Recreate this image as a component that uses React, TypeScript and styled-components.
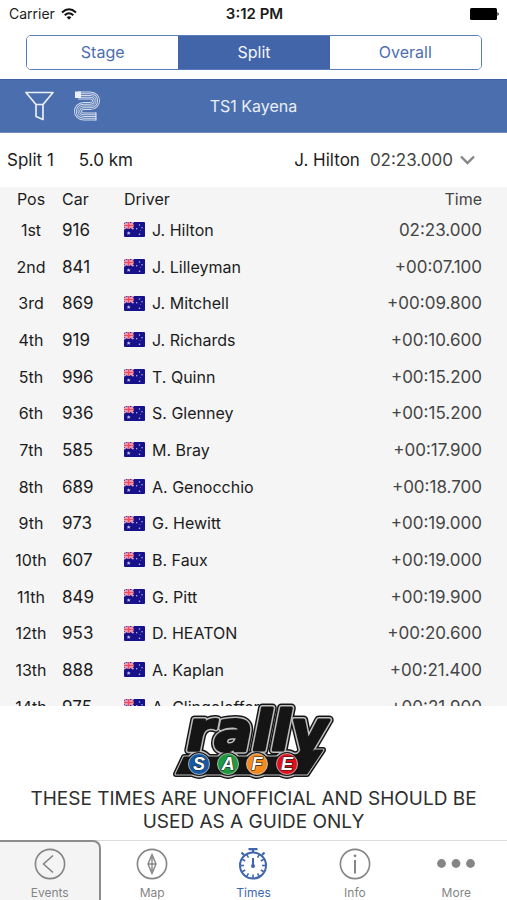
import React, { useState } from "react";
import styled, { createGlobalStyle } from "styled-components";

const GlobalStyle = createGlobalStyle`
  * { box-sizing: border-box; }
  body {
    margin: 0;
    background: #fff;
    color: #1c1c1c;
    font-family: Inter, "Liberation Sans", sans-serif;
    font-size: 16px;
  }
  button { font: inherit; border: 0; padding: 0; cursor: pointer; }
`;

const Screen = styled.div`
  display: flex;
  flex-direction: column;
  height: 100vh;
  overflow: hidden;
`;

const StatusBar = styled.header`
  display: grid;
  grid-template-columns: 1fr auto 1fr;
  align-items: center;
  height: 35px;
  padding: 0 7px 8px 9px;
  font-size: 14px;
  flex: none;
`;

const Carrier = styled.div`
  display: flex;
  align-items: center;
  gap: 6px;
`;

const Clock = styled.strong`
  font-size: 15px;
  font-weight: 600;
`;

const BatteryIcon = styled.svg`
  justify-self: end;
`;

const Segments = styled.div`
  display: flex;
  flex: none;
  height: 35px;
  margin: 0 25px 9px 26px;
  border: 1px solid #5b7dba;
  border-radius: 5px;
  overflow: hidden;
`;

const Segment = styled.button<{ $active: boolean }>`
  flex: 1;
  padding-bottom: 2px;
  color: ${(p) => (p.$active ? "#f4f7fc" : "#4c6fb0")};
  background: ${(p) => (p.$active ? "#4165a8" : "#fff")};
`;

const StageBar = styled.div`
  display: grid;
  grid-template-columns: 1fr auto 1fr;
  align-items: center;
  flex: none;
  height: 54px;
  padding: 0 25px;
  color: #e9eef7;
  background: #4b6eae;
  border-top: 1px solid #3f62a3;
  border-bottom: 1px solid #6f8cc0;
`;

const Tools = styled.div`
  display: flex;
  gap: 20px;
`;

const ToolButton = styled.button`
  display: flex;
  color: inherit;
  background: none;
`;

const StageName = styled.h1`
  margin: 0;
  font-size: 16px;
  font-weight: 400;
`;

const SplitSummary = styled.button`
  display: flex;
  align-items: center;
  flex: none;
  height: 54px;
  padding: 0 32px 0 7px;
  color: #1c1c1c;
  background: #fff;
  font-size: 17px;
  white-space: nowrap;
`;

const Distance = styled.span`
  margin-left: 25px;
`;

const Leader = styled.span`
  margin-left: auto;
`;

const LeaderTime = styled.span`
  margin: 0 7px 0 10px;
  color: #454545;
`;

const Results = styled.main`
  flex: 1;
  min-height: 0;
  overflow: hidden;
  background: #f5f5f5;
`;

const Table = styled.table`
  width: 100%;
  table-layout: fixed;
  border-collapse: collapse;
`;

const HeadRow = styled.tr`
  height: 24px;
`;

const Row = styled.tr`
  height: 37px;
  &:nth-child(3n) { height: 36px; }
`;

const columnWidth = { pos: "62px", car: "62px", driver: "auto", time: "160px" };

const HeadCell = styled.th<{ $col: keyof typeof columnWidth }>`
  width: ${(p) => columnWidth[p.$col]};
  padding: ${(p) => (p.$col === "time" ? "0 25px 0 0" : "0")};
  font-weight: 400;
  text-align: ${(p) => (p.$col === "pos" ? "center" : p.$col === "time" ? "right" : "left")};
  color: ${(p) => (p.$col === "time" ? "#454545" : "#1c1c1c")};
`;

const Cell = styled.td`
  padding: 0;
  white-space: nowrap;
`;

const PosCell = styled(Cell)`
  text-align: center;
`;

const CarCell = styled(Cell)`
  font-size: 17px;
`;

const TimeCell = styled(Cell)`
  padding-right: 25px;
  font-size: 17px;
  text-align: right;
  color: #454545;
`;

const Driver = styled.div`
  display: flex;
  align-items: center;
  gap: 7px;
`;

const Notice = styled.footer`
  display: flex;
  flex-direction: column;
  align-items: center;
  flex: none;
  padding: 0 25px 7px;
  background: #fff;
`;

const NoticeText = styled.p`
  margin: 7px 0 0;
  font-size: 19px;
  line-height: 23px;
  text-align: center;
  color: #2e2e2e;
`;

const TabBar = styled.nav`
  display: grid;
  grid-template-columns: repeat(5, 1fr);
  flex: none;
  height: 60px;
  border-top: 1px solid #dcdcdc;
`;

const Tab = styled.button<{ $active?: boolean; $back?: boolean }>`
  display: flex;
  flex-direction: column;
  align-items: center;
  gap: 4px;
  margin-top: -1px;
  padding-top: 6px;
  font-size: 12px;
  line-height: 18px;
  color: ${(p) => (p.$active ? "#3f66ad" : "#858585")};
  background: ${(p) => (p.$back ? "#f4f4f4" : "transparent")};
  border: 0 solid #8d8d8d;
  border-width: ${(p) => (p.$back ? "2px 2px 0 0" : "2px 0 0")};
  border-color: ${(p) => (p.$back ? "#8d8d8d" : "transparent")};
  border-top-right-radius: ${(p) => (p.$back ? "8px" : "0")};
`;

const Wifi = () => (
  <svg width="16" height="12" viewBox="0 0 16 12" fill="none" stroke="#111" strokeWidth="2">
    <path d="M1 4.4Q8-1.8 15 4.4" />
    <path d="M3.7 7.2Q8 3.3 12.3 7.2" />
    <path d="M5.7 9.2Q8 7.4 10.3 9.2L8 11.8Z" fill="#111" stroke="none" />
  </svg>
);

const Battery = () => (
  <BatteryIcon width="31" height="12" viewBox="0 0 31 12">
    <rect x="1" width="27" height="12" rx="1.5" />
    <path d="M28.5 4Q31 6 28.5 8Z" />
  </BatteryIcon>
);

const Funnel = () => (
  <svg width="29" height="30" viewBox="0 0 29 30" fill="none" stroke="currentColor" strokeWidth="1.7" strokeLinejoin="round">
    <path d="M1 1.5H28L18 13.5H11ZM11 13.5V25.5L18 28.5V13.5" />
  </svg>
);

const Track = () => {
  const d = "M4 4.5H16C24 4.5 24 15 16 15H10C2 15 2 25.5 10 25.5H22";
  return (
    <svg width="26" height="30" viewBox="0 0 26 30" fill="none">
      <path d={d} stroke="#d3ddee" strokeWidth="8" />
      <path d={d} stroke="#4b6eae" strokeWidth="6.2" />
      <path d={d} stroke="#d3ddee" strokeWidth="4.4" />
      <path d={d} stroke="#4b6eae" strokeWidth="2.6" />
      <path d={d} stroke="#d3ddee" strokeWidth="1" />
      <rect x="1" y="0.5" width="6" height="6.5" fill="currentColor" />
      <path d="M22 21.5V29.5" stroke="currentColor" />
    </svg>
  );
};

const Chevron = () => (
  <svg width="15" height="10" viewBox="0 0 15 10" fill="none" stroke="#858585" strokeWidth="2.4">
    <path d="M1 1.5L7.5 8L14 1.5" />
  </svg>
);

const Flag = () => (
  <svg width="21" height="15" viewBox="0 0 21 15" role="img" aria-label="Australia">
    <rect width="21" height="15" rx="1" fill="#17128c" />
    <path d="M0 0L9.5 7M9.5 0L0 7" stroke="#e8a3c0" strokeWidth="1.8" />
    <path d="M4.7 0V7M0 3.5H9.5" stroke="#f3b3c3" strokeWidth="2.8" />
    <path d="M4.7 0V7M0 3.5H9.5" stroke="#ee4a60" strokeWidth="1.6" />
    <g fill="#c5c5ec">
      <path d="M4.7 9.2L5.3 10.5 6.6 10.6 5.7 11.5 6 12.8 4.7 12.1 3.4 12.8 3.7 11.5 2.8 10.6 4.1 10.5Z" />
      <circle cx="15.5" cy="3" r="0.7" />
      <circle cx="12.7" cy="6.8" r="0.7" />
      <circle cx="18" cy="5.8" r="0.7" />
      <circle cx="16.5" cy="8.4" r="0.4" />
      <circle cx="15.5" cy="12.2" r="0.8" />
    </g>
  </svg>
);

const LogoSvg = styled.svg`
  overflow: visible;
`;

const Logo = () => {
  const badges = [
    { x: 29, fill: "#1559a8", letter: "S" },
    { x: 58, fill: "#1f9a41", letter: "A" },
    { x: 87, fill: "#f58a1f", letter: "F" },
    { x: 117, fill: "#e3101c", letter: "E" },
  ];
  const layers = [
    { color: "#151515", text: 9, bar: 6, ring: 8 },
    { color: "#bdbdbd", text: 6, bar: 3, ring: 5 },
    { color: "#151515", text: 3, bar: 1, ring: 2 },
  ];
  return (
    <LogoSvg width="168" height="74" viewBox="0 0 168 74" role="img" aria-label="Rally Safe">
      {layers.map((l, i) => (
        <g key={i} fill={l.color} stroke={l.color} strokeLinejoin="round">
          <path d="M14 51H133L145 44L153 44L137 68H6Z" strokeWidth={l.bar} />
          {badges.map((b) => (
            <circle key={b.x} cx={b.x} cy="58" r="11" strokeWidth={l.ring} />
          ))}
          <text
            x="17"
            y="44"
            fontFamily="DejaVu Sans"
            fontWeight="700"
            fontStyle="italic"
            fontSize="56"
            strokeWidth={l.text}
          >
            rally
          </text>
        </g>
      ))}
      {badges.map((b) => (
        <g key={b.x}>
          <circle cx={b.x} cy="58" r="10.5" fill={b.fill} stroke="#ddd" strokeWidth="0.7" />
          <text
            x={b.x}
            y="64"
            fontFamily="Liberation Sans"
            fontWeight="700"
            fontStyle="italic"
            fontSize="18"
            textAnchor="middle"
            fill="#fff"
            stroke="#222"
            strokeWidth="1.2"
            paintOrder="stroke"
          >
            {b.letter}
          </text>
        </g>
      ))}
    </LogoSvg>
  );
};

const TabIcon = ({ children }: { children: React.ReactNode }) => (
  <svg width="40" height="32" viewBox="0 0 40 32" fill="none" stroke="currentColor" strokeWidth="1.6">
    {children}
  </svg>
);

const icons: Record<string, React.ReactNode> = {
  Events: (
    <TabIcon>
      <circle cx="20" cy="16" r="14.6" />
      <path d="M23 7.5L13.5 16L23 24.5" />
    </TabIcon>
  ),
  Map: (
    <TabIcon>
      <circle cx="20" cy="16" r="14.6" />
      <path d="M20 6.5L24 16L20 25.5L16 16ZM16 16H24M20 9V23" strokeWidth="1.4" />
    </TabIcon>
  ),
  Times: (
    <TabIcon>
      <circle cx="20" cy="17.5" r="13" strokeWidth="2" />
      <path d="M15.5 1.2H24.5M20 1V5M8.5 4.5L11 7M31.5 4.5L29 7" strokeWidth="2.2" />
      <path d="M20 10V17" strokeWidth="2" />
      <circle cx="20" cy="18" r="2" fill="currentColor" stroke="none" />
      {[30, 60, 90, 120, 150, 180, 210, 240, 270, 300, 330].map((a) => (
        <path key={a} d="M20 5V8.5" transform={`rotate(${a} 20 17.5)`} />
      ))}
    </TabIcon>
  ),
  Info: (
    <TabIcon>
      <circle cx="20" cy="16" r="14.6" />
      <path d="M20 12V25.5" strokeWidth="2" />
      <circle cx="20" cy="7.8" r="1.4" fill="currentColor" stroke="none" />
    </TabIcon>
  ),
  More: (
    <TabIcon>
      <g fill="currentColor" stroke="none">
        <circle cx="5.5" cy="15.5" r="4.4" />
        <circle cx="20" cy="15.5" r="4.4" />
        <circle cx="34.5" cy="15.5" r="4.4" />
      </g>
    </TabIcon>
  ),
};

const results = [
  ["1st", "916", "J. Hilton", "02:23.000"],
  ["2nd", "841", "J. Lilleyman", "+00:07.100"],
  ["3rd", "869", "J. Mitchell", "+00:09.800"],
  ["4th", "919", "J. Richards", "+00:10.600"],
  ["5th", "996", "T. Quinn", "+00:15.200"],
  ["6th", "936", "S. Glenney", "+00:15.200"],
  ["7th", "585", "M. Bray", "+00:17.900"],
  ["8th", "689", "A. Genocchio", "+00:18.700"],
  ["9th", "973", "G. Hewitt", "+00:19.000"],
  ["10th", "607", "B. Faux", "+00:19.000"],
  ["11th", "849", "G. Pitt", "+00:19.900"],
  ["12th", "953", "D. HEATON", "+00:20.600"],
  ["13th", "888", "A. Kaplan", "+00:21.400"],
  ["14th", "975", "A. Clingeleffer", "+00:21.900"],
];

export default function App() {
  const [view, setView] = useState("Split");
  return (
    <>
      <GlobalStyle />
      <Screen>
        <StatusBar>
          <Carrier>
            Carrier <Wifi />
          </Carrier>
          <Clock>3:12 PM</Clock>
          <Battery />
        </StatusBar>
        <Segments>
          {["Stage", "Split", "Overall"].map((name) => (
            <Segment key={name} $active={name === view} aria-pressed={name === view} onClick={() => setView(name)}>
              {name}
            </Segment>
          ))}
        </Segments>
        <StageBar>
          <Tools>
            <ToolButton aria-label="Filter">
              <Funnel />
            </ToolButton>
            <ToolButton aria-label="Stages">
              <Track />
            </ToolButton>
          </Tools>
          <StageName>TS1 Kayena</StageName>
        </StageBar>
        <SplitSummary>
          <span>Split 1</span>
          <Distance>5.0 km</Distance>
          <Leader>J. Hilton</Leader>
          <LeaderTime>02:23.000</LeaderTime>
          <Chevron />
        </SplitSummary>
        <Results>
          <Table>
            <thead>
              <HeadRow>
                <HeadCell $col="pos">Pos</HeadCell>
                <HeadCell $col="car">Car</HeadCell>
                <HeadCell $col="driver">Driver</HeadCell>
                <HeadCell $col="time">Time</HeadCell>
              </HeadRow>
            </thead>
            <tbody>
              {results.map(([pos, car, driver, time]) => (
                <Row key={pos}>
                  <PosCell>{pos}</PosCell>
                  <CarCell>{car}</CarCell>
                  <Cell>
                    <Driver>
                      <Flag />
                      {driver}
                    </Driver>
                  </Cell>
                  <TimeCell>{time}</TimeCell>
                </Row>
              ))}
            </tbody>
          </Table>
        </Results>
        <Notice>
          <Logo />
          <NoticeText>THESE TIMES ARE UNOFFICIAL AND SHOULD BE USED AS A GUIDE ONLY</NoticeText>
        </Notice>
        <TabBar>
          {Object.keys(icons).map((name) => (
            <Tab key={name} $back={name === "Events"} $active={name === "Times"}>
              {icons[name]}
              {name}
            </Tab>
          ))}
        </TabBar>
      </Screen>
    </>
  );
}
